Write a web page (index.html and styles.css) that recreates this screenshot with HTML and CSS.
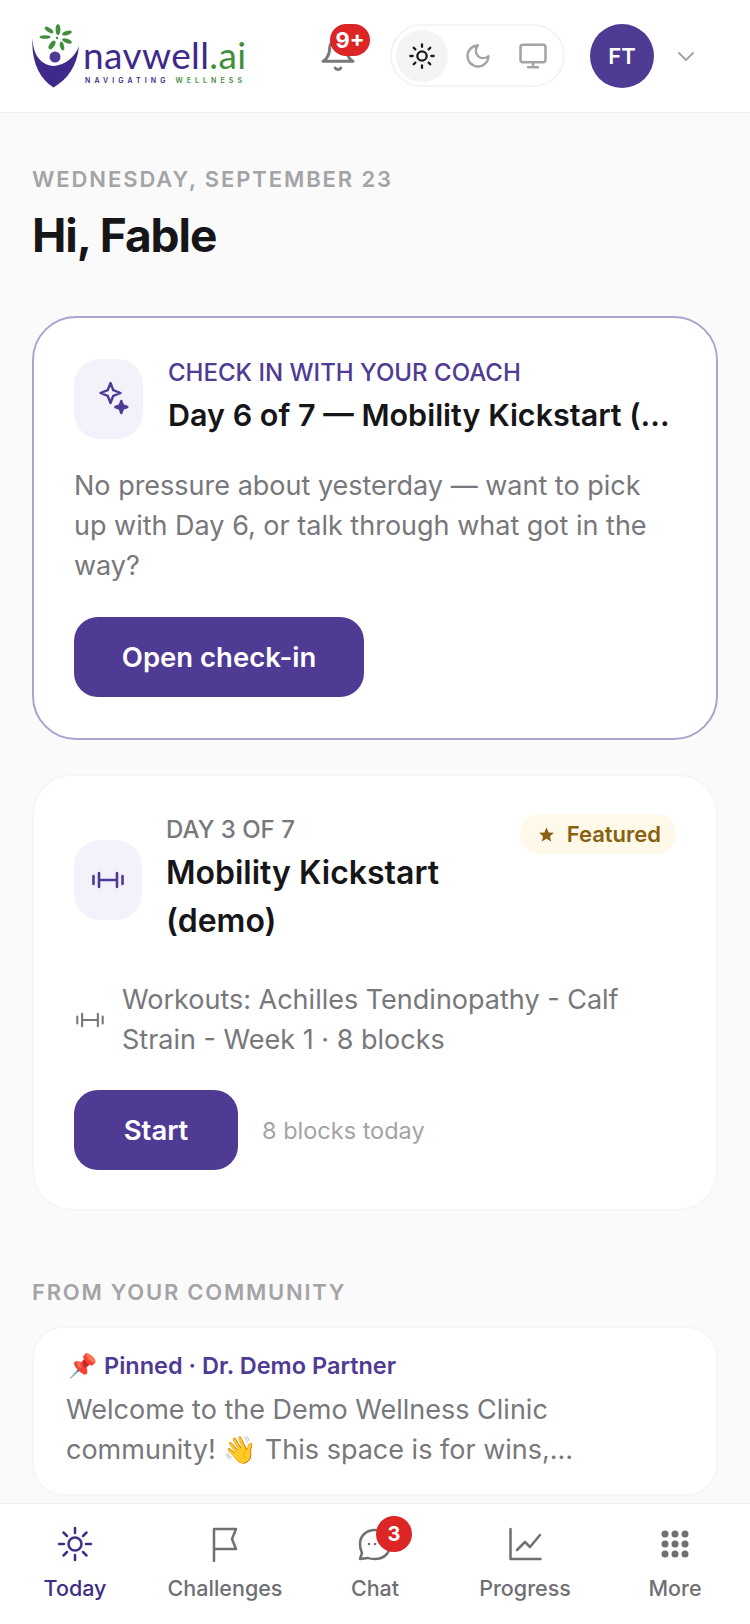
FILE: index.html
```html
<!DOCTYPE html>
<html lang="en">
<head>
    <meta charset="UTF-8">
    <meta name="viewport" content="width=device-width, initial-scale=1.0">
    <title>Today - Navwell</title>
    <link rel="stylesheet" href="styles.css">
</head>
<body>
    <header class="topbar">
        <div class="logo">
            <svg class="logo-mark" viewBox="0 0 48 64" width="48" height="64">
                <g fill="#3f8f3c">
                    <ellipse cx="26" cy="5.500" rx="2.400" ry="5.500"/>
                    <ellipse cx="35" cy="9" rx="5" ry="2" transform="rotate(-18 35 9)"/>
                    <ellipse cx="35" cy="17" rx="5" ry="2" transform="rotate(20 35 17)"/>
                    <ellipse cx="30" cy="22" rx="2" ry="4.500" transform="rotate(-15 30 22)"/>
                    <ellipse cx="20" cy="21" rx="2.400" ry="5" transform="rotate(35 20 21)"/>
                    <ellipse cx="13" cy="13" rx="5.500" ry="1.800"/>
                    <ellipse cx="17" cy="6" rx="5" ry="2" transform="rotate(35 17 6)"/>
                    <circle cx="25" cy="14" r="1.200"/>
                </g>
                <circle cx="23" cy="33" r="5.500" fill="#4f3a94"/>
                <path d="M0.500 14C1 30 8 41 22 42 33 41 43 33 47 22 45 42 36 55 21.500 63.500 8 55 -1 38 0.500 14Z" fill="#3f2a8a"/>
            </svg>
            <div class="logo-words">
                <div class="logo-name">navwell<span class="logo-ai">.ai</span></div>
                <div class="logo-tag">NAVIGATING <span class="logo-ai">WELLNESS</span></div>
            </div>
        </div>
        <div class="bell">
            <svg viewBox="0 0 24 24" width="40" height="40" fill="none" stroke="#77777c" stroke-width="1.800" stroke-linecap="round" stroke-linejoin="round">
                <path d="M7 9a5 5 0 0 1 10 0c0 6 4 8 4 8H3s4-2 4-8"/>
                <path d="M10.300 21a2 2 0 0 0 3.400 0"/>
            </svg>
            <span class="count-badge bell-badge">9+</span>
        </div>
        <div class="theme-toggle">
            <span class="theme-btn theme-btn-active">
                <svg viewBox="0 0 24 24" width="28" height="28" fill="none" stroke="#1c1c20" stroke-width="2" stroke-linecap="round">
                    <circle cx="12" cy="12" r="4"/>
                    <path d="M12 2v2M12 20v2M4.900 4.900l1.400 1.400M17.700 17.700l1.400 1.400M2 12h2M20 12h2M6.300 17.700l-1.400 1.400M19.100 4.900l-1.400 1.400"/>
                </svg>
            </span>
            <span class="theme-btn">
                <svg viewBox="0 0 24 24" width="28" height="28" fill="none" stroke="#a3a3a8" stroke-width="2" stroke-linecap="round" stroke-linejoin="round">
                    <path d="M12 3a6 6 0 0 0 9 9 9 9 0 1 1-9-9Z"/>
                </svg>
            </span>
            <span class="theme-btn">
                <svg viewBox="0 0 24 24" width="30" height="30" fill="none" stroke="#a3a3a8" stroke-width="2" stroke-linecap="round" stroke-linejoin="round">
                    <rect x="2" y="3" width="20" height="14" rx="2"/>
                    <path d="M8 21h8M12 17v4"/>
                </svg>
            </span>
        </div>
        <div class="avatar">FT</div>
        <svg class="chevron" viewBox="0 0 24 24" width="24" height="24" fill="none" stroke="#a3a3a8" stroke-width="2" stroke-linecap="round" stroke-linejoin="round">
            <path d="M5 9l7 7 7-7"/>
        </svg>
    </header>

    <main class="content">
        <div class="date-label">WEDNESDAY, SEPTEMBER 23</div>
        <h1>Hi, Fable</h1>

        <section class="card card-checkin">
            <div class="card-head">
                <div class="icon-tile">
                    <svg viewBox="0 0 40 40" width="40" height="40" fill="none" stroke="#4f3a94" stroke-width="2.400" stroke-linejoin="round">
                        <path d="M21.500 4l2.800 7.200 7.200 2.800-7.200 2.800-2.800 7.200-2.800-7.200-7.200-2.800 7.200-2.800Z"/>
                        <path d="M32.300 22l1.600 4.400 4.400 1.600-4.400 1.600-1.600 4.400-1.600-4.400-4.400-1.600 4.400-1.600Z" fill="#4f3a94"/>
                    </svg>
                </div>
                <div class="head-text">
                    <div class="eyebrow eyebrow-purple">CHECK IN WITH YOUR COACH</div>
                    <div class="card-title card-title-clip">Day 6 of 7 — Mobility Kickstart (demo)</div>
                </div>
            </div>
            <p class="card-copy">No pressure about yesterday — want to pick up with Day 6, or talk through what got in the way?</p>
            <button class="primary-btn">Open check-in</button>
        </section>

        <section class="card card-plan">
            <div class="card-head card-head-plan">
                <div class="icon-tile">
                    <svg viewBox="0 0 32 32" width="32" height="32" fill="none" stroke="#4f3a94" stroke-width="2.600" stroke-linecap="round">
                        <path d="M1.500 12v8M7 9v14M25 9v14M30.500 12v8M7 16h18"/>
                    </svg>
                </div>
                <div class="head-text">
                    <div class="eyebrow">DAY 3 OF 7</div>
                    <div class="card-title card-title-wrap">Mobility Kickstart (demo)</div>
                </div>
                <div class="featured">
                    <svg viewBox="0 0 24 24" width="17" height="17" fill="#8a5f12">
                        <path d="M12 2l3 7 7.500 .6-5.700 4.900 1.800 7.300L12 17.900 5.400 21.800l1.800-7.300L1.500 9.600 9 9Z"/>
                    </svg>
                    Featured
                </div>
            </div>
            <div class="workout-row">
                <svg class="workout-icon" viewBox="0 0 32 32" width="28" height="28" fill="none" stroke="#77777c" stroke-width="2.400" stroke-linecap="round">
                    <path d="M1.500 12v8M7 9v14M25 9v14M30.500 12v8M7 16h18"/>
                </svg>
                <div class="workout-text">Workouts: Achilles Tendinopathy - Calf Strain - Week 1 · 8 blocks</div>
            </div>
            <div class="action-row">
                <button class="primary-btn primary-btn-small">Start</button>
                <span class="action-note">8 blocks today</span>
            </div>
        </section>

        <div class="section-label">FROM YOUR COMMUNITY</div>
        <section class="card card-post">
            <div class="post-author"><span class="post-pin">📌</span><span>Pinned · Dr. Demo Partner</span></div>
            <div class="post-body">Welcome to the Demo Wellness Clinic community! 👋 This space is for wins,…</div>
        </section>
    </main>

    <nav class="bottom-nav">
        <a class="nav-item nav-item-active">
            <svg viewBox="0 0 36 36" width="36" height="36" fill="none" stroke="#3f2f86" stroke-width="2.500" stroke-linecap="round">
                <circle cx="18" cy="18" r="6.500"/>
                <path d="M18 2v5M18 29v5M6.500 6.500l3.500 3.500M26 26l3.500 3.500M2 18h5M29 18h5M6.500 29.500L10 26M26 10l3.500-3.500"/>
            </svg>
            Today
        </a>
        <a class="nav-item">
            <svg viewBox="0 0 36 36" width="36" height="36" fill="none" stroke="#6f6f74" stroke-width="2.500" stroke-linejoin="round" stroke-linecap="round">
                <path d="M7 35V3h22l-4 10 4 10H7"/>
            </svg>
            Challenges
        </a>
        <a class="nav-item">
            <span class="nav-icon">
                <svg viewBox="0 0 36 36" width="36" height="36" fill="none" stroke="#6f6f74" stroke-width="2.500" stroke-linejoin="round" stroke-linecap="round">
                    <path d="M18 4C9 4 3 10 3 18c0 4 1 7 2 9l-2 6 8-1c2 1 5 1 7 1 9 0 15-6 15-14S27 4 18 4Z"/>
                    <path d="M12 18h.1M18 18h.1"/>
                </svg>
                <span class="count-badge chat-badge">3</span>
            </span>
            Chat
        </a>
        <a class="nav-item">
            <svg viewBox="0 0 36 36" width="36" height="36" fill="none" stroke="#6f6f74" stroke-width="2.500" stroke-linejoin="round" stroke-linecap="round">
                <path d="M3.500 3v30h30"/>
                <path d="M10 24l8-8 5 5 10-12"/>
            </svg>
            Progress
        </a>
        <a class="nav-item">
            <svg viewBox="0 0 36 36" width="36" height="36" fill="#6f6f74">
                <circle cx="8" cy="8" r="3.500"/><circle cx="18" cy="8" r="3.500"/><circle cx="28" cy="8" r="3.500"/>
                <circle cx="8" cy="18" r="3.500"/><circle cx="18" cy="18" r="3.500"/><circle cx="28" cy="18" r="3.500"/>
                <circle cx="8" cy="28" r="3.500"/><circle cx="18" cy="28" r="3.500"/><circle cx="28" cy="28" r="3.500"/>
            </svg>
            More
        </a>
    </nav>
</body>
</html>
```

FILE: styles.css
```css
* {
    margin: 0;
    padding: 0;
    box-sizing: border-box;
}

body {
    font-family: Inter, 'Noto Sans', sans-serif;
    background: #fafafa;
    color: #161618;
    height: 100vh;
    display: flex;
    flex-direction: column;
    overflow: hidden;
}

.topbar {
    flex: none;
    height: 113px;
    background: white;
    border-bottom: 1px solid #f0f0f1;
    padding: 24px 0 0 32px;
    display: flex;
    align-items: flex-start;
}

.logo {
    display: flex;
    align-items: flex-start;
    width: 286px;
    flex: none;
}

.logo-mark {
    flex: none;
}

.logo-words {
    margin-left: 3px;
    padding-top: 11px;
}

.logo-name {
    font-family: Lato, sans-serif;
    font-size: 37px;
    line-height: 40px;
    letter-spacing: 0.4px;
    color: #3f2a8a;
}

.logo-ai {
    color: #3f8f3c;
}

.logo-tag {
    margin: 1px 0 0 2px;
    font-size: 7px;
    line-height: 9px;
    font-weight: 600;
    letter-spacing: 4.1px;
    color: #3f2a8a;
    white-space: nowrap;
}

.bell {
    position: relative;
    width: 40px;
    height: 62px;
    padding-top: 9px;
    flex: none;
}

.count-badge {
    background: #dc2626;
    color: white;
    font-weight: 700;
    display: flex;
    align-items: center;
    justify-content: center;
}

.bell-badge {
    position: absolute;
    top: 0;
    left: 12px;
    width: 40px;
    height: 32px;
    border-radius: 16px;
    font-size: 22px;
}

.theme-toggle {
    flex: none;
    margin-left: 32px;
    width: 175px;
    height: 63px;
    border: 2px solid #f4f4f5;
    border-radius: 32px;
    padding: 4px;
    display: flex;
    align-items: center;
    gap: 4px;
}

.theme-btn {
    width: 52px;
    height: 52px;
    border-radius: 50%;
    display: flex;
    align-items: center;
    justify-content: center;
}

.theme-btn-active {
    background: #f4f4f5;
}

.avatar {
    flex: none;
    margin-left: 25px;
    width: 64px;
    height: 64px;
    border-radius: 50%;
    background: #4f3a94;
    color: white;
    font-size: 22px;
    font-weight: 600;
    display: flex;
    align-items: center;
    justify-content: center;
}

.chevron {
    margin: 20px 0 0 20px;
}

.content {
    flex: 1;
    min-height: 0;
    overflow: hidden;
    padding: 0 32px;
}

.date-label {
    margin-top: 54px;
    font-size: 22px;
    line-height: 24px;
    font-weight: 600;
    letter-spacing: 1.9px;
    color: #a3a3a8;
}

h1 {
    margin-top: 18px;
    font-size: 46px;
    line-height: 52px;
    font-weight: 700;
    letter-spacing: -1px;
}

.card {
    background: white;
    border: 2px solid #f6f6f7;
    border-radius: 40px;
    padding: 40px;
}

.card-checkin {
    margin-top: 55px;
    height: 424px;
    border-color: #aaa5cf;
    border-radius: 44px;
}

.card-plan {
    margin-top: 34px;
    height: 437px;
    padding-top: 39px;
}

.card-head {
    display: flex;
    align-items: center;
    gap: 25px;
}

.icon-tile {
    flex: none;
    width: 69px;
    height: 80px;
    border-radius: 26px;
    background: #f3f1f9;
    display: flex;
    align-items: center;
    justify-content: center;
}

.head-text {
    min-width: 0;
    flex: 1;
    padding-bottom: 4px;
}

.eyebrow {
    font-size: 24px;
    line-height: 30px;
    font-weight: 500;
    color: #77777c;
}

.eyebrow-purple {
    color: #4f3a94;
}

.card-title {
    margin-top: 6px;
    font-size: 30.5px;
    line-height: 42px;
    font-weight: 600;
}

.card-title-clip {
    white-space: nowrap;
    overflow: hidden;
    text-overflow: ellipsis;
}

.card-title-wrap {
    margin-top: 4px;
    width: 290px;
    font-size: 32px;
    line-height: 48px;
}

.card-copy {
    margin-top: 26px;
    font-size: 27px;
    line-height: 40px;
    color: #77777c;
}

.primary-btn {
    display: block;
    margin-top: 31px;
    width: 290px;
    height: 80px;
    border: none;
    border-radius: 24px;
    background: #4f3a94;
    color: white;
    font-family: inherit;
    font-size: 27.5px;
    font-weight: 600;
}

.primary-btn-small {
    margin-top: 0;
    width: 164px;
}

.card-head-plan {
    gap: 24px;
}

.card-head-plan .icon-tile {
    width: 68px;
}

.card-head-plan .head-text {
    padding-bottom: 0;
}

.featured {
    flex: none;
    align-self: flex-start;
    margin-top: -1px;
    height: 40px;
    padding: 0 15px 0 18px;
    border-radius: 20px;
    background: #fef9e8;
    color: #8a5f12;
    font-size: 22px;
    font-weight: 600;
    display: flex;
    align-items: center;
    gap: 12px;
}

.workout-row {
    margin-top: 35px;
    display: flex;
    align-items: center;
    gap: 18px;
}

.workout-icon {
    flex: none;
    margin-left: 2px;
}

.workout-text {
    font-size: 27px;
    line-height: 40px;
    color: #77777c;
}

.action-row {
    margin-top: 30px;
    display: flex;
    align-items: center;
    gap: 24px;
}

.action-note {
    font-size: 23.5px;
    color: #a3a3a8;
}

.section-label {
    margin-top: 69px;
    font-size: 22px;
    line-height: 24px;
    font-weight: 600;
    letter-spacing: 1.75px;
    color: #a3a3a8;
}

.card-post {
    margin-top: 22px;
    height: 170px;
    padding: 22px 40px 22px 32px;
    border-radius: 32px;
}

.post-author {
    font-size: 23.5px;
    line-height: 32px;
    font-weight: 600;
    color: #4f3a94;
    display: flex;
    align-items: center;
}

.post-pin {
    margin: 0 7px 0 2px;
}

.post-body {
    margin-top: 8px;
    font-size: 27px;
    line-height: 40px;
    color: #77777c;
}

.bottom-nav {
    flex: none;
    height: 121px;
    background: white;
    border-top: 1px solid #f0f0f1;
    display: grid;
    grid-template-columns: repeat(5, 150px);
    padding-top: 22px;
}

.nav-item {
    display: flex;
    flex-direction: column;
    align-items: center;
    gap: 11px;
    font-size: 21.5px;
    line-height: 30px;
    font-weight: 500;
    color: #6f6f74;
}

.nav-item-active {
    color: #3f2f86;
}

.nav-icon {
    position: relative;
    display: block;
    height: 36px;
}

.chat-badge {
    position: absolute;
    top: -10px;
    left: 19px;
    width: 36px;
    height: 36px;
    border-radius: 50%;
    font-size: 20px;
}
```
